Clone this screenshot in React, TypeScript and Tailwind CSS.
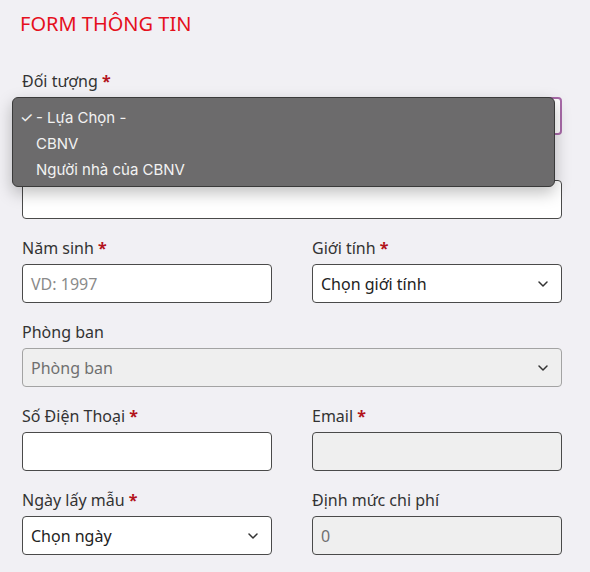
import React from 'react';

const Star = () => <span className="text-[#b3131b] font-bold"> *</span>;

function Label({ text, required }: { text: string; required?: boolean }) {
  return (
    <div className="h-6 leading-6 mb-1 text-[16px] text-[#333]">
      {text}
      {required && <Star />}
    </div>
  );
}

function Chevron() {
  return (
    <svg className="w-[12px] h-[8px] absolute right-[12px] top-1/2 -translate-y-1/2" viewBox="0 0 12 8" fill="none">
      <path d="M2 2l4 4 4-4" stroke="#333" strokeWidth={1.5} strokeLinecap="round" strokeLinejoin="round" />
    </svg>
  );
}

function Field({
  text,
  required,
  value,
  placeholder,
  select,
  disabled,
  soft,
}: {
  text: string;
  required?: boolean;
  value?: string;
  placeholder?: string;
  select?: boolean;
  disabled?: boolean;
  soft?: boolean;
}) {
  return (
    <div>
      <Label text={text} required={required} />
      <div
        className={`relative h-[39px] rounded-[4px] border flex items-center px-[8px] text-[16px] ${
          disabled ? 'bg-[#efefef]' : 'bg-white'
        } ${soft ? 'border-[#a3a3a3] bg-[#ebecec]' : 'border-[#4a4a4a]'}`}
      >
        {value && <span className={disabled ? 'text-[#6f6f6f]' : 'text-[#222]'}>{value}</span>}
        {placeholder && <span className="text-[#8a8a8a]">{placeholder}</span>}
        {select && <Chevron />}
      </div>
    </div>
  );
}

export default function App() {
  return (
    <div className="min-h-[572px] bg-[#f1f0f4] relative" style={{ fontFamily: '"Noto Sans", "Open Sans", sans-serif' }}>
      <div className="pl-[22px] w-[562px] pt-[10px]">
        {/* Title */}
        <h1 className="-ml-[2px] h-7 leading-7 text-[20px] text-[#e5101d] mb-[31px]">FORM THÔNG TIN</h1>

        {/* Đối tượng */}
        <div className="mb-[17px]">
          <Label text="Đối tượng" required />
          <div className="h-[38px] rounded-[4px] border-2 border-[#a86aa8] bg-white" />
        </div>

        {/* field whose label sits under the open menu */}
        <div className="mb-[17px]">
          <div className="h-6 mb-1" />
          <div className="h-[39px] rounded-[4px] border border-[#4a4a4a] bg-white" />
        </div>

        <div className="grid grid-cols-2 gap-x-[40px] gap-y-[17px]">
          <Field text="Năm sinh" required placeholder="VD: 1997" />
          <Field text="Giới tính" required value="Chọn giới tính" select />
          <div className="col-span-2">
            <Field text="Phòng ban" value="Phòng ban" select disabled soft />
          </div>
          <Field text="Số Điện Thoại" required />
          <Field text="Email" required disabled />
          <Field text="Ngày lấy mẫu" required value="Chọn ngày" select />
          <Field text="Định mức chi phí" value="0" disabled />
        </div>
      </div>

      {/* Open dropdown menu */}
      <div
        className="absolute left-[12px] top-[97px] w-[543px] h-[90px] rounded-[6px] bg-[#6c6b6c] border border-[#3a3a3a] shadow-[0_6px_16px_rgba(0,0,0,0.25)] pt-[7px] text-[15px] text-[#f2f2f2]"
        style={{ fontFamily: 'Inter, "Liberation Sans", sans-serif' }}
      >
        <div className="h-[26px] flex items-center">
          <span className="w-[23px] pl-[7px] text-[15px]">✓</span>
          <span>- Lựa Chọn -</span>
        </div>
        <div className="h-[26px] flex items-center pl-[23px]">CBNV</div>
        <div className="h-[26px] flex items-center pl-[23px]">Người nhà của CBNV</div>
      </div>
    </div>
  );
}
